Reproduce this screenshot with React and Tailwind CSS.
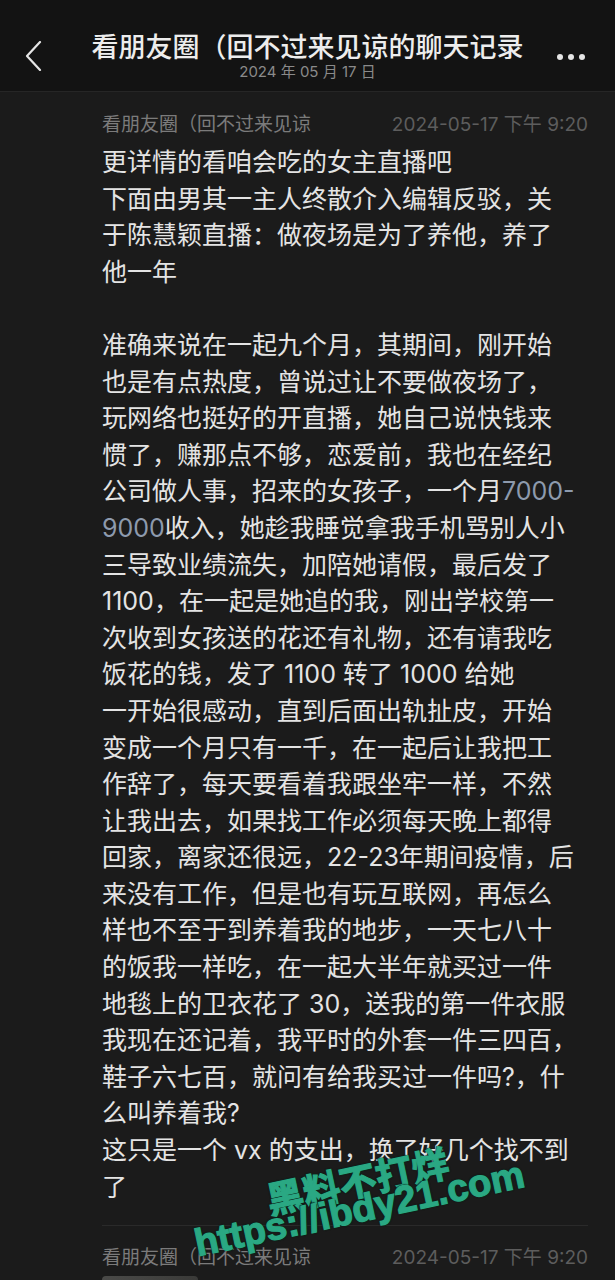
import React from "react";

const NAME = "看朋友圈（回不过来见谅";
const TIME = "2024-05-17 下午 9:20";

// each entry is one rendered line; [text, highlight?] segments
const lines = [
  "更详情的看咱会吃的女主直播吧",
  "下面由男其一主人终散介入编辑反驳，关",
  "于陈慧颖直播：做夜场是为了养他，养了",
  "他一年",
  "",
  "准确来说在一起九个月，其期间，刚开始",
  "也是有点热度，曾说过让不要做夜场了，",
  "玩网络也挺好的开直播，她自己说快钱来",
  "惯了，赚那点不够，恋爱前，我也在经纪",
  [["公司做人事，招来的女孩子，一个月", false], ["7000-", true]],
  [["9000", true], ["收入，她趁我睡觉拿我手机骂别人小", false]],
  "三导致业绩流失，加陪她请假，最后发了",
  "1100，在一起是她追的我，刚出学校第一",
  "次收到女孩送的花还有礼物，还有请我吃",
  "饭花的钱，发了 1100 转了 1000 给她",
  "一开始很感动，直到后面出轨扯皮，开始",
  "变成一个月只有一千，在一起后让我把工",
  "作辞了，每天要看着我跟坐牢一样，不然",
  "让我出去，如果找工作必须每天晚上都得",
  "回家，离家还很远，22-23年期间疫情，后",
  "来没有工作，但是也有玩互联网，再怎么",
  "样也不至于到养着我的地步，一天七八十",
  "的饭我一样吃，在一起大半年就买过一件",
  "地毯上的卫衣花了 30，送我的第一件衣服",
  "我现在还记着，我平时的外套一件三四百，",
  "鞋子六七百，就问有给我买过一件吗?，什",
  "么叫养着我?",
  "这只是一个 vx 的支出，换了好几个找不到",
  "了",
];

const MetaRow = () => (
  <div className="flex items-center justify-between text-[19px] leading-[28px]">
    <span className="text-[#7b7b7b]">{NAME}</span>
    <span className="text-[#5d5d5d]">{TIME}</span>
  </div>
);

export default function App() {
  return (
    <div className="relative h-[1280px] w-[615px] overflow-hidden bg-[#1b1b1b] font-['Inter','Noto_Sans_CJK_SC',sans-serif]">
      <header className="grid h-[92px] grid-cols-[80px_1fr_80px] border-b border-[#262626] bg-[#131313]">
        <div className="pl-[24px] pt-[41px]">
          <svg width="20" height="30" viewBox="0 0 20 30" fill="none">
            <path d="M16 1 L3 15 L16 29" stroke="#e5e5e5" strokeWidth="2.2" strokeLinecap="round" strokeLinejoin="round" />
          </svg>
        </div>
        <div className="flex flex-col items-center pt-[33px]">
          <h1 className="whitespace-nowrap text-[27px] font-medium leading-[30px] text-[#ededed]">
            看朋友圈（回不过来见谅的聊天记录
          </h1>
          <p className="text-[15px] leading-[18px] text-[#8a8a8a]">2024 年 05 月 17 日</p>
        </div>
        <div className="flex items-start justify-end gap-[5px] pr-[30px] pt-[54px]">
          <span className="h-[6px] w-[6px] rounded-full bg-[#e5e5e5]" />
          <span className="h-[6px] w-[6px] rounded-full bg-[#e5e5e5]" />
          <span className="h-[6px] w-[6px] rounded-full bg-[#e5e5e5]" />
        </div>
      </header>

      <main className="pl-[102px] pr-[27px] pt-[19px]">
        <MetaRow />
        <div className="mt-[5px] text-[25px] leading-[36.6px] text-[#e4e4e4]">
          {lines.map((line, i) => (
            <div key={i} className="h-[36.6px] whitespace-nowrap">
              {Array.isArray(line)
                ? line.map(([t, hl], j) => (
                    <span key={j} className={hl ? "text-[#8d9aad]" : ""}>
                      {t}
                    </span>
                  ))
                : line}
            </div>
          ))}
        </div>

        <div className="mt-[20px] h-px bg-[#2a2a2a]" />
        <div className="mt-[18px]">
          <MetaRow />
        </div>
        <div className="mt-[4px] h-[30px] w-[96px] rounded-t-[4px] bg-gradient-to-r from-[#4a4a48] to-[#3a3a38]" />
      </main>

      {/* watermark */}
      <div className="pointer-events-none absolute left-[176px] top-[1164px] flex w-[360px] -rotate-[12deg] flex-col items-center font-bold text-[#2aa883] [-webkit-text-stroke:1.2px_#2aa883] [text-shadow:0_0_2px_#06261c,1px_1px_1px_#06261c,-1px_-1px_1px_#06261c]">
        <span className="pl-[8px] font-['Noto_Sans_CJK_SC',sans-serif] text-[37px] leading-[32px]">黑料不打烊</span>
        <span className="font-['Liberation_Sans',Arial,sans-serif] text-[38px] leading-[26px]">https://ibdy21.com</span>
      </div>
    </div>
  );
}
